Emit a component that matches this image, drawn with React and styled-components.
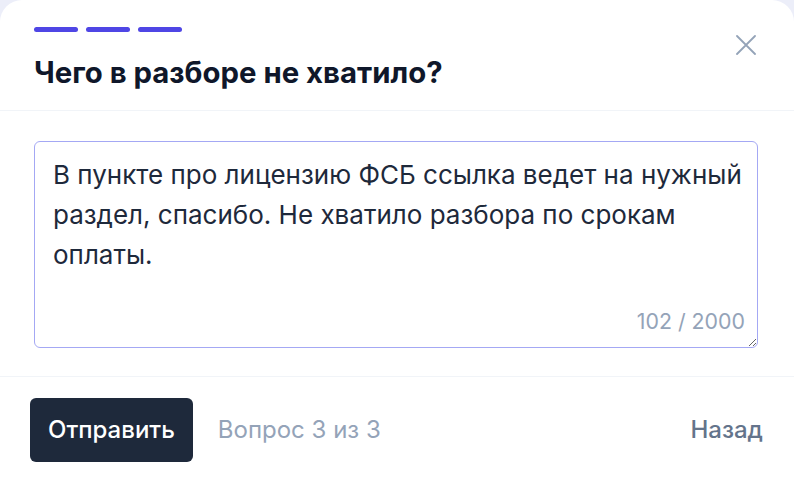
import React from "react";
import styled, { createGlobalStyle } from "styled-components";

const GlobalStyle = createGlobalStyle`
  * { box-sizing: border-box; }
  html, body {
    margin: 0;
    padding: 0;
    background: #eceef9;
    font-family: Inter, "Noto Sans", sans-serif;
  }
`;

const Card = styled.div`
  width: 794px;
  height: 478px;
  background: #fff;
  border-radius: 22px 22px 0 0;
  display: flex;
  flex-direction: column;
  overflow: hidden;
`;

const Header = styled.div`
  position: relative;
  height: 111px;
  padding: 27px 34px 0;
  border-bottom: 1px solid #f1f4f8;
`;

const Steps = styled.div`
  display: flex;
  gap: 8px;
`;

const Step = styled.span`
  width: 44px;
  height: 5px;
  border-radius: 3px;
  background: ${(p) => (p.active ? "#4f46e5" : "#e2e8f0")};
`;

const Title = styled.h2`
  margin: 23px 0 0;
  font-size: 29.33px;
  line-height: 36px;
  font-weight: 700;
  color: #0f172a;
`;

const Close = styled.button`
  position: absolute;
  top: 31px;
  right: 34px;
  width: 28px;
  height: 28px;
  padding: 0;
  border: none;
  background: none;
  display: flex;
  align-items: center;
  justify-content: center;
  cursor: pointer;
`;

const Body = styled.div`
  padding: 30px 36px 28px 34px;
  border-bottom: 1px solid #f1f4f8;
`;

const Field = styled.div`
  position: relative;
`;

const Area = styled.textarea`
  display: block;
  width: 100%;
  height: 207px;
  padding: 13px 10px 13px 18px;
  border: 1px solid #a4a8f4;
  border-radius: 6px;
  font-family: Inter, "Noto Sans", sans-serif;
  font-size: 26px;
  line-height: 40px;
  color: #1e293b;
  outline: none;
  resize: both;
`;

const Counter = styled.span`
  position: absolute;
  right: 13px;
  bottom: 13px;
  font-size: 21.33px;
  line-height: 28px;
  color: #94a3b8;
`;

const Footer = styled.div`
  flex: 1;
  display: flex;
  align-items: center;
  padding: 0 31px 0 30px;
  margin-top: 4px;
`;

const Submit = styled.button`
  height: 64px;
  padding: 0 18px;
  border: none;
  border-radius: 6px;
  background: #1e293b;
  color: #fff;
  font-family: Inter, "Noto Sans", sans-serif;
  font-size: 24px;
  font-weight: 500;
  cursor: pointer;
`;

const Progress = styled.span`
  margin-left: 25px;
  font-size: 24px;
  color: #94a3b8;
`;

const Back = styled.button`
  margin-left: auto;
  padding: 0;
  border: none;
  background: none;
  font-family: Inter, "Noto Sans", sans-serif;
  font-size: 24px;
  font-weight: 500;
  color: #64748b;
  cursor: pointer;
`;

const text =
  "В пункте про лицензию ФСБ ссылка ведет на нужный раздел, спасибо. Не хватило разбора по срокам оплаты.";

export default function App() {
  return (
    <>
      <GlobalStyle />
      <Card>
        <Header>
          <Steps>
            <Step active />
            <Step active />
            <Step active />
          </Steps>
          <Title>Чего в разборе не хватило?</Title>
          <Close aria-label="Закрыть">
            <svg width="20" height="20" viewBox="0 0 20 20">
              <path
                d="M1 1L19 19M19 1L1 19"
                stroke="#94a3b8"
                strokeWidth="1.8"
                strokeLinecap="round"
              />
            </svg>
          </Close>
        </Header>
        <Body>
          <Field>
            <Area defaultValue={text} />
            <Counter>102 / 2000</Counter>
          </Field>
        </Body>
        <Footer>
          <Submit>Отправить</Submit>
          <Progress>Вопрос 3 из 3</Progress>
          <Back>Назад</Back>
        </Footer>
      </Card>
    </>
  );
}
